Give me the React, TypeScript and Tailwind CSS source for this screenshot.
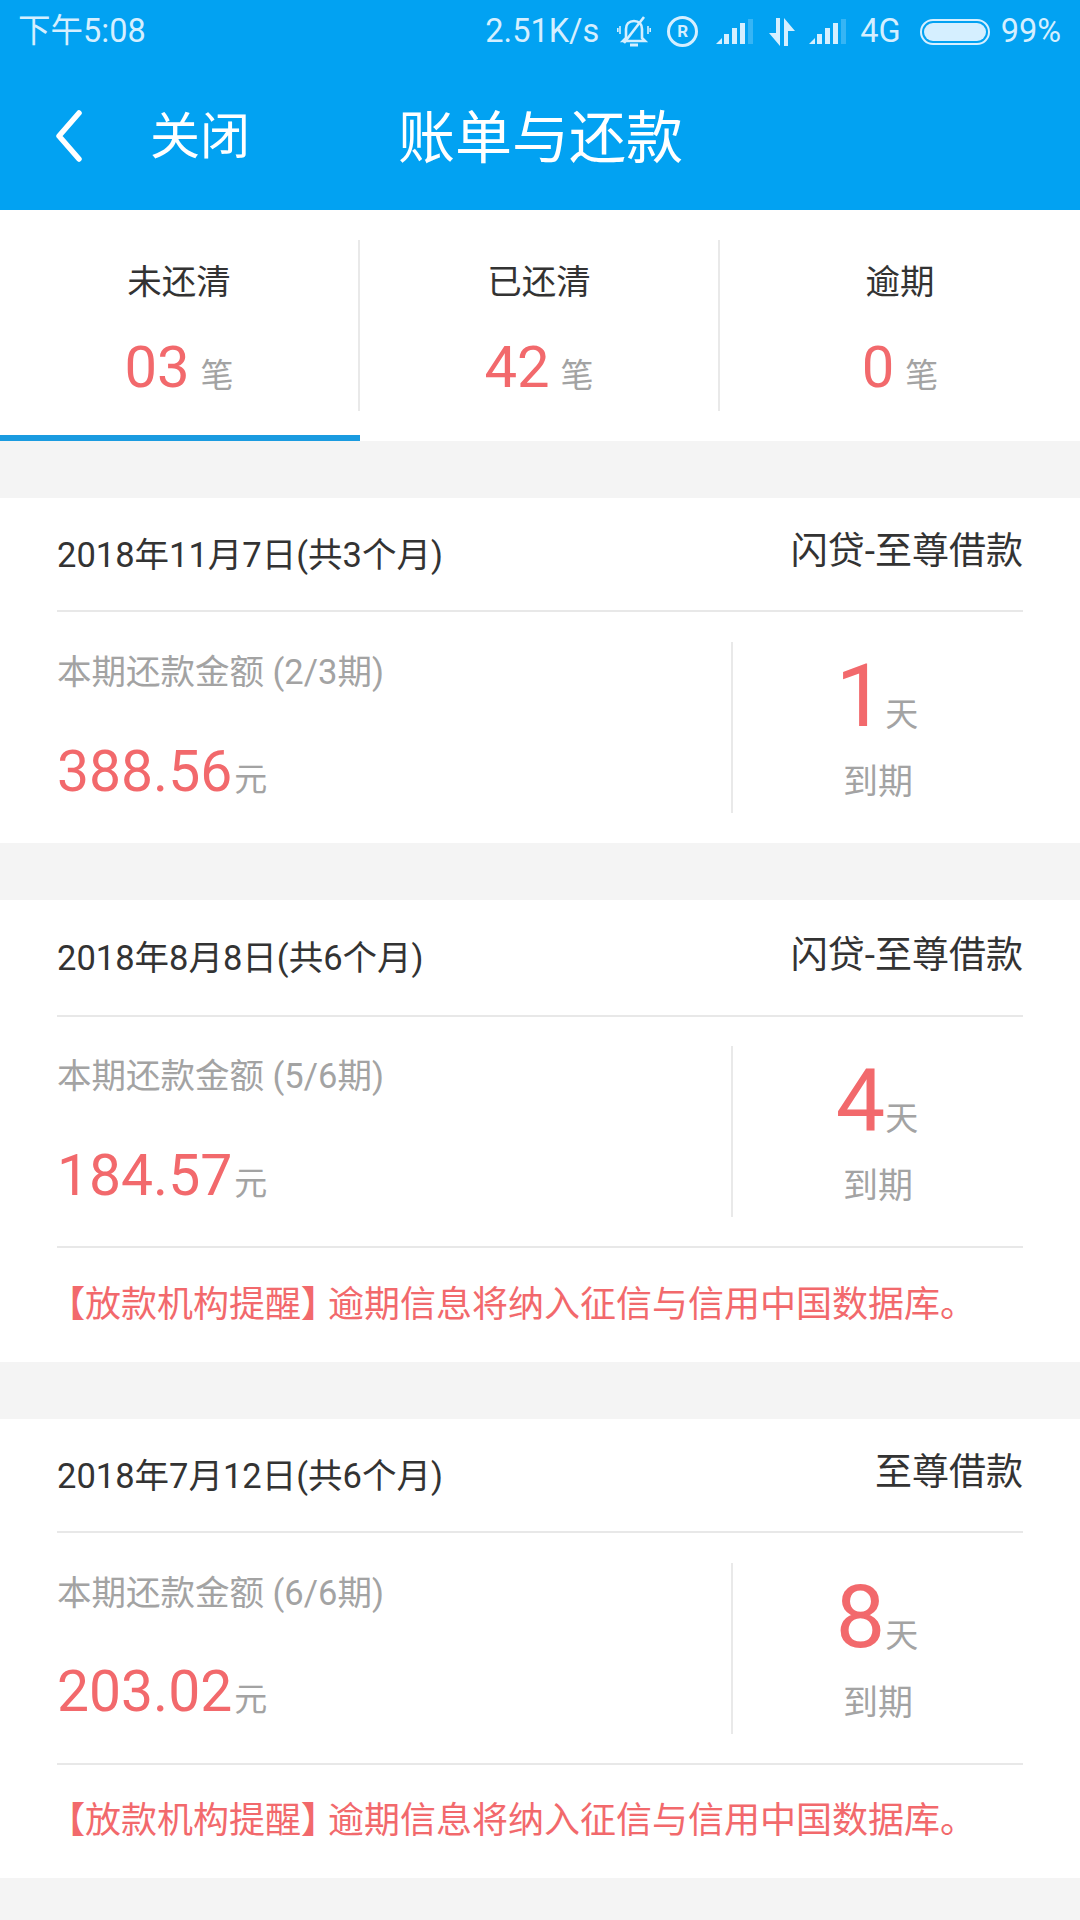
const font = "font-['Roboto','Noto_Sans_CJK_SC',sans-serif]";

const tabs = [
  { label: "未还清", count: "03", active: true },
  { label: "已还清", count: "42", active: false },
  { label: "逾期", count: "0", active: false },
];

const bills = [
  {
    date: "2018年11月7日(共3个月)",
    product: "闪贷-至尊借款",
    period: "本期还款金额 (2/3期)",
    amount: "388.56",
    days: "1",
    headClass: "h-[114px]",
    bodyClass: "h-[231px]",
    noticeClass: "",
  },
  {
    date: "2018年8月8日(共6个月)",
    product: "闪贷-至尊借款",
    period: "本期还款金额 (5/6期)",
    amount: "184.57",
    days: "4",
    headClass: "h-[117px]",
    bodyClass: "h-[229px]",
    noticeClass: "h-[116px]",
  },
  {
    date: "2018年7月12日(共6个月)",
    product: "至尊借款",
    period: "本期还款金额 (6/6期)",
    amount: "203.02",
    days: "8",
    headClass: "h-[114px]",
    bodyClass: "h-[230px]",
    noticeClass: "h-[115px]",
  },
];

function Signal() {
  return (
    <svg width="37" height="25" viewBox="0 0 37 25" fill="#d5efff">
      <path d="M0 25 L6 19 V25 Z" />
      <rect x="8" y="15" width="5" height="10" />
      <rect x="16" y="9" width="5" height="16" />
      <rect x="24" y="4" width="5" height="21" />
      <rect x="32" y="0" width="5" height="25" opacity="0.25" />
    </svg>
  );
}

function MutedBell() {
  return (
    <svg width="34" height="32" viewBox="0 0 34 32" fill="none" stroke="#d5efff" strokeWidth="2.6">
      <path d="M9 22 V13 C9 8 12 5 17 5 C22 5 25 8 25 13 V22 L28 25 H6 Z" />
      <path d="M13 29 H21" strokeWidth="3" />
      <path d="M27 1 L7 27" />
      <path d="M3 10 V18 M0.8 12 V16 M31 10 V18 M33.2 12 V16" strokeWidth="1.6" />
    </svg>
  );
}

function StatusBar() {
  return (
    <div className="flex h-[60px] items-center justify-between pt-[3px] pl-[18px] pr-[19px] text-[32.5px] leading-none text-[#d5efff]">
      <span>下午5:08</span>
      <div className="flex items-center">
        <span className="mr-[18px]">2.51K/s</span>
        <MutedBell />
        <div className="ml-[16px] mr-[18px] flex h-[31px] w-[31px] items-center justify-center rounded-full border-[3px] border-[#d5efff] text-[17px] font-bold">
          R
        </div>
        <Signal />
        <svg className="ml-[15px] mr-[13px]" width="28" height="28" viewBox="0 0 28 28" fill="#d5efff">
          <path d="M8 0 H12 V28 L1 15 H8 Z" />
          <path d="M16 0 L27 13 H20 V28 H16 Z" />
        </svg>
        <Signal />
        <span className="ml-[14px] mr-[19px]">4G</span>
        <div className="mr-[11px] h-[26px] w-[70px] rounded-full border-[2px] border-[#d5efff] p-[2px]">
          <div className="h-full w-full rounded-full bg-[#d5efff]" />
        </div>
        <span>99%</span>
      </div>
    </div>
  );
}

function TopBar() {
  return (
    <div className="flex h-[150px] items-center pt-[7px] text-white">
      <svg className="ml-[55px] -mt-[5px]" width="28" height="52" viewBox="0 0 28 52" fill="none" stroke="#ffffff" strokeWidth="5.5" strokeLinecap="round" strokeLinejoin="round">
        <path d="M24 3 L4 26 L24 49" />
      </svg>
      <span className="ml-[67px] -mt-[3px] text-[50px] leading-none">关闭</span>
      <span className="ml-[148px] text-[57px] leading-none">账单与还款</span>
    </div>
  );
}

function Tabs() {
  return (
    <div className="flex h-[231px] bg-white">
      {tabs.map((tab, i) => (
        <div key={tab.label} className="relative flex h-full w-[360px] items-start pt-[30px]">
          <div className={`flex h-[171px] flex-1 flex-col items-center ${i < 2 ? "border-r-2 border-[#e9e9e9]" : ""}`}>
            <span className="mt-[20px] text-[34.5px] leading-[44px] text-[#333333]">{tab.label}</span>
            <div className="mt-[28px] flex items-baseline">
              <span className="text-[58px] leading-[70px] text-[#f2696c]">{tab.count}</span>
              <span className="ml-[11px] text-[33px] text-[#a3a3a3]">笔</span>
            </div>
          </div>
          {tab.active && <div className="absolute bottom-0 left-0 h-[6px] w-full bg-[#1a9be0]" />}
        </div>
      ))}
    </div>
  );
}

function BillCard({ bill }: { bill: (typeof bills)[number] }) {
  return (
    <section className="mt-[57px] bg-white px-[57px]">
      <div className={`flex items-center justify-between border-b-2 border-[#e8e8e8] ${bill.headClass}`}>
        <span className="mt-[2px] text-[34.5px] leading-none text-[#333333]">{bill.date}</span>
        <span className="-mt-[5px] text-[37px] leading-none text-[#333333]">{bill.product}</span>
      </div>
      <div className={`flex items-center ${bill.bodyClass}`}>
        <div className="flex-1 pt-[7px]">
          <div className="text-[34.5px] leading-none text-[#a3a3a3]">{bill.period}</div>
          <div className="mt-[47px] flex items-baseline">
            <span className="text-[57px] leading-[70px] text-[#f2696c]">{bill.amount}</span>
            <span className="ml-[2px] text-[33px] text-[#a3a3a3]">元</span>
          </div>
        </div>
        <div className="flex h-[171px] w-[292px] flex-col items-center border-l-2 border-[#e9e9e9]">
          <div className="-ml-[2px] mt-[2px] flex h-[104px] items-baseline">
            <span className="text-[88px] leading-[104px] text-[#f2696c]">{bill.days}</span>
            <span className="text-[33px] text-[#a3a3a3]">天</span>
          </div>
          <span className="mt-[13px] text-[35px] leading-[44px] text-[#a3a3a3]">到期</span>
        </div>
      </div>
      {bill.noticeClass && (
        <div className={`flex items-center border-t-2 border-[#e8e8e8] pb-[1px] ${bill.noticeClass}`}>
          <p className="-ml-[8px] text-[36px] leading-none whitespace-nowrap text-[#f2696c] [text-spacing-trim:space-all]">
            <span className="font-bold">【</span>
            放款机构提醒
            <span className="font-bold tracking-[-9px]">】</span>
            逾期信息将纳入征信与信用中国数据库。
          </p>
        </div>
      )}
    </section>
  );
}

export default function App() {
  return (
    <div className={`h-[1920px] w-[1080px] overflow-hidden bg-[#f4f4f4] ${font}`}>
      <header className="bg-[#02a2f2]">
        <StatusBar />
        <TopBar />
      </header>
      <Tabs />
      {bills.map((bill) => (
        <BillCard key={bill.date} bill={bill} />
      ))}
    </div>
  );
}
